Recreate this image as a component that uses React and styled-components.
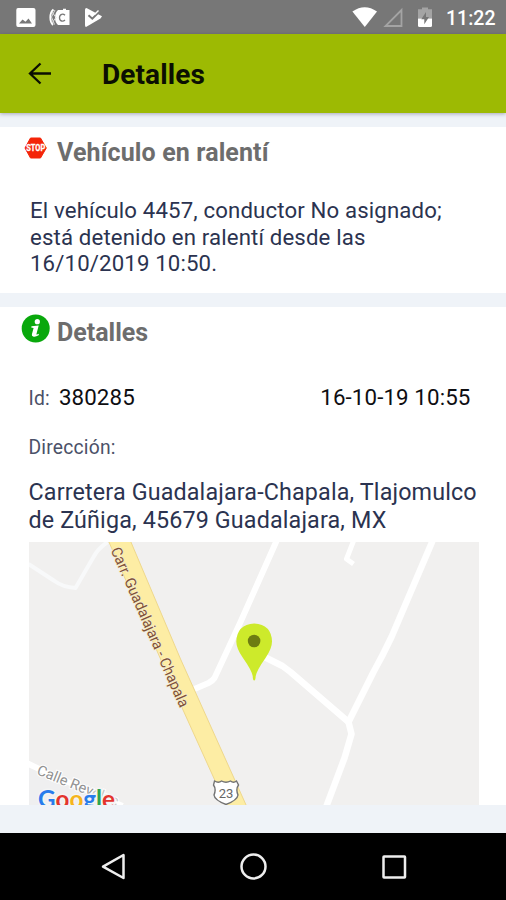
import styled, { createGlobalStyle } from "styled-components";

const GlobalStyle = createGlobalStyle`
  * {
    box-sizing: border-box;
    margin: 0;
    padding: 0;
  }

  body {
    background-color: #eff3f8;
    font-family: Roboto, "Liberation Sans", sans-serif;
  }
`

const Screen = styled.div`
  width: 506px;
  height: 900px;
  display: flex;
  flex-direction: column;
  background-color: #eff3f8;
  overflow: hidden;
`

const StatusBar = styled.div`
  height: 34px;
  flex-shrink: 0;
  display: flex;
  justify-content: space-between;
  background-color: #777777;
  color: white;
`

const StatusIcons = styled.svg`
  display: block;
  height: 34px;
`

const StatusRight = styled.div`
  display: flex;
  align-items: center;
`

const Clock = styled.span`
  width: 60px;
  padding-top: 2px;
  font-size: 19.5px;
  font-weight: 500;
`

const Header = styled.header`
  height: 79px;
  flex-shrink: 0;
  display: flex;
  align-items: center;
  padding: 3px 0 0 27px;
  background-color: #9dba03;
  box-shadow: 0 1px 4px rgba(60, 50, 90, 0.4);
`

const HeaderTitle = styled.h1`
  margin-left: 49px;
  font-size: 28px;
  font-weight: 700;
  line-height: 32px;
  letter-spacing: 0.1px;
  color: #0b0f02;
`

const BackArrow = styled.svg`
  margin-top: -2px;
`

const Card = styled.section`
  height: ${props => props.$height};
  flex-shrink: 0;
  margin-top: 14px;
  padding: 0 27.5px 0 28.5px;
  background-color: white;
`

const CardTitle = styled.div`
  display: flex;
  align-items: flex-start;
  height: 50px;
  margin-left: -7.5px;
  padding-top: 7px;
`

const CardName = styled.h2`
  margin: 4px 0 0 7px;
  font-size: 25px;
  font-weight: 700;
  line-height: 30px;
  letter-spacing: ${props => props.$spacing};
  color: #6d6d6d;
`

const Message = styled.p`
  padding: 20px 0 0 1.5px;
  font-size: 22.2px;
  line-height: 26.7px;
  letter-spacing: 0.15px;
  white-space: nowrap;
  color: #2b3350;
`

const InfoRow = styled.div`
  display: flex;
  justify-content: space-between;
  align-items: baseline;
  height: 30px;
  margin-top: 25px;
  padding-right: 8px;
  line-height: 30px;
`

const Label = styled.span`
  font-size: 19.3px;
  letter-spacing: 0.2px;
  color: #4b5168;
`

const Value = styled.span`
  margin-left: ${props => props.$left || "0"};
  font-size: 22.3px;
  letter-spacing: 0.12px;
  color: #0e0e12;
`

const AddressLabel = styled.div`
  height: 30px;
  margin-top: 21px;
  line-height: 30px;
`

const Address = styled.p`
  margin-top: 15px;
  font-size: 23.3px;
  line-height: 28px;
  letter-spacing: 0.15px;
  white-space: nowrap;
  color: #2b3350;
`

const Map = styled.svg`
  display: block;
  width: 450px;
  height: 263px;
  margin-top: 8px;
`

const NavBar = styled.nav`
  height: 67px;
  flex-shrink: 0;
  margin-top: 28px;
  background-color: black;
`

function StopIcon() {
  return (
    <svg width="29" height="30" viewBox="0 0 29 30">
      <path d="M9.5 4H19.5L25.3 14L19.5 24H9.5L4 14Z" fill="#f42408" stroke="#f42408" strokeWidth="1" strokeLinejoin="round" />
      <text x="14.7" y="17.2" textAnchor="middle" textLength="19" lengthAdjust="spacingAndGlyphs" fontSize="8.5" fontWeight="700" fill="white" stroke="white" strokeWidth="0.3">STOP</text>
    </svg>
  )
}

function InfoIcon() {
  return (
    <svg width="29" height="30" viewBox="0 0 29 30">
      <circle cx="14.7" cy="14.5" r="14" fill="#09a80c" />
      <circle cx="16.3" cy="7.7" r="2.6" fill="white" />
      <path d="M10.5 12.2L17.7 11.5L15.4 20.2Q15.4 20.8 18 19.8L17.6 21.3Q14.5 23.3 12.1 22.6Q10.5 22 10.9 20.2L12.6 13.9L10.2 13.5Z" fill="white" />
    </svg>
  )
}

function NotificationIcons() {
  return (
    <StatusIcons width="120" viewBox="0 0 120 34">
      <path fillRule="evenodd" fill="white" d="M18 8H33.5Q35.5 8 35.5 10V25Q35.5 27 33.5 27H18Q16.3 27 16.3 25V10Q16.3 8 18 8ZM19 23.5H32L28.5 18.5L25.5 21.7L22.5 19.5Z" />
      <path d="M58 10H63V8.8H66V10H69.5V25H58Q55 22.5 55 17.5Q55 12.5 58 10Z" fill="white" />
      <path d="M65 15.3Q63.5 13.8 61.7 14.3Q59.5 15 59.5 17.7Q59.5 20.4 61.7 21Q63.5 21.4 65 20" fill="none" stroke="#777777" strokeWidth="1.3" />
      <path d="M53.5 9.5Q50.3 12 50.3 17.5Q50.3 22.5 53 25" fill="none" stroke="white" strokeWidth="1.8" />
      <path d="M55 10L51.5 17L54.5 24.5M52 12L56 17.5L52 23" fill="none" stroke="#dddddd" strokeWidth="1" />
      <path d="M86.5 8L102 16.2L100.5 18.5L86 27Q85 27 85 25V9.5Q85 8 86.5 8Z" fill="white" />
      <path d="M88.5 15.3L92.3 18.7L100.5 10.6" fill="none" stroke="#777777" strokeWidth="2" />
      <path d="M94.5 14.5L98.5 10.5" stroke="white" strokeWidth="1.5" />
    </StatusIcons>
  )
}

function SystemIcons() {
  return (
    <StatusIcons width="94" viewBox="352 0 94 34">
      <path d="M352.4 11.5Q364.7 3 377 11.5L364.8 27Z" fill="white" />
      <path d="M401.500 10V26H385.500Z" fill="none" stroke="#a4a4a4" strokeWidth="1.8" />
      <path d="M422 7.500H428V9.300H432V18.500H418V9.300H422Z" fill="#a4a4a4" />
      <path d="M418 18.500H432V25.500Q432 27 430.500 27H419.500Q418 27 418 25.500Z" fill="white" />
      <path d="M426 12L421.300 19.300H424.300V24.300L429 17H426Z" fill="#777777" />
    </StatusIcons>
  )
}

function RouteMap() {
  return (
    <Map viewBox="28.5 542 450 263">
      <rect x="28" y="542" width="451" height="263" fill="#f1f0ef" />
      <g fill="none" stroke="white" strokeWidth="6" strokeLinejoin="round">
        <path d="M276 541L240 622L214 678Q212 681 208 683L194 689" />
        <path d="M254 652L282 666L290 672L348 722" strokeWidth="6.5" />
        <path d="M432 541L391 637Q382 656 373 672L348 722L351 734L344 758L326 806" strokeWidth="6.5" />
        <path d="M353 541L346 559L353 564" strokeWidth="5" />
        <path d="M28 564L54 581Q62 587 75 588L93 557Q97 549 107 542" stroke="#f8f9fa" strokeWidth="4" />
        <path d="M26 763L60 779L122 806" />
      </g>
      <path d="M28.5 768L115 806H28.5Z" fill="#efeff0" />
      <path d="M108 541H130L180 659L246 806H226L183 711Z" fill="#fdeda4" stroke="#efd88c" strokeWidth="1" />
      <text transform="translate(110 550) rotate(66.3)" textLength="173" lengthAdjust="spacingAndGlyphs" fontSize="15" fill="#805238" stroke="#f7edcf" strokeWidth="1.5" paintOrder="stroke">
        Carr. Guadalajara - Chapala
      </text>
      <text transform="translate(35.5 774) rotate(22)" fontSize="14.5" fill="#929292" stroke="white" strokeWidth="2" paintOrder="stroke">
        Calle Rev<tspan fill="#c4c4c4">oluc</tspan>
      </text>
      <text x="37.5" y="807.5" textLength="77" lengthAdjust="spacingAndGlyphs" fontFamily="Lato, Roboto, sans-serif" fontSize="25" fontWeight="700" stroke="#f4f4f4" strokeWidth="3" paintOrder="stroke">
        <tspan fill="#287cec">G</tspan>
        <tspan fill="#e3342e">o</tspan>
        <tspan fill="#f6b51c">o</tspan>
        <tspan fill="#287cec">g</tspan>
        <tspan fill="#2da452">l</tspan>
        <tspan fill="#e3342e">e</tspan>
      </text>
      <path d="M214 781Q218 783.5 221 781Q225.5 783.5 230 781Q233 783.5 236 781L238 785Q235 789 237.5 795Q237 800 225.5 804.5Q214 800 213.5 795Q216 789 213 785Z" fill="white" stroke="#737373" strokeWidth="1.4" />
      <text x="225.5" y="798" textAnchor="middle" fontSize="13" fill="#666666">23</text>
      <path d="M253.7 680.5Q252.3 680.5 252.2 676Q251 670 242.5 658Q235.8 648.5 235.8 641.5Q236.5 624.5 253.7 623.5Q271 624.5 271.5 641.5Q271.5 648.5 265 658Q256.5 670 255.2 676Q255 680.5 253.7 680.5Z" fill="#cdea2b" />
      <circle cx="253.6" cy="641" r="6.3" fill="#6d7c12" />
    </Map>
  )
}

export default function App() {
  return (
    <Screen>
      <GlobalStyle />
      <StatusBar>
        <NotificationIcons />
        <StatusRight>
          <SystemIcons />
          <Clock>11:22</Clock>
        </StatusRight>
      </StatusBar>
      <Header>
        <BackArrow width="26" height="26" viewBox="0 0 26 26">
          <path d="M24 12.5H3M13.500 2.500L3 12.500L13.500 22.500" fill="none" stroke="#0b0f02" strokeWidth="2.300" />
        </BackArrow>
        <HeaderTitle>Detalles</HeaderTitle>
      </Header>
      <Card $height="166px">
        <CardTitle>
          <StopIcon />
          <CardName $spacing="0.12px">Vehículo en ralentí</CardName>
        </CardTitle>
        <Message>
          El vehículo 4457, conductor No asignado;<br />
          está detenido en ralentí desde las<br />
          16/10/2019 10:50.
        </Message>
      </Card>
      <Card $height="498px">
        <CardTitle>
          <InfoIcon />
          <CardName $spacing="0px">Detalles</CardName>
        </CardTitle>
        <InfoRow>
          <div>
            <Label>Id:</Label>
            <Value $left="9px">380285</Value>
          </div>
          <Value>16-10-19 10:55</Value>
        </InfoRow>
        <AddressLabel>
          <Label>Dirección:</Label>
        </AddressLabel>
        <Address>
          Carretera Guadalajara-Chapala, Tlajomulco<br />
          de Zúñiga, 45679 Guadalajara, MX
        </Address>
        <RouteMap />
      </Card>
      <NavBar>
        <svg width="506" height="67" viewBox="0 833 506 67" fill="none" stroke="#eeeeee" strokeWidth="2.5">
          <path d="M123.5 855V878L103 866.7Z" strokeLinejoin="round" />
          <circle cx="253.5" cy="866.5" r="12" />
          <rect x="383.5" y="856.5" width="21.5" height="21" rx="0.5" />
        </svg>
      </NavBar>
    </Screen>
  )
}
